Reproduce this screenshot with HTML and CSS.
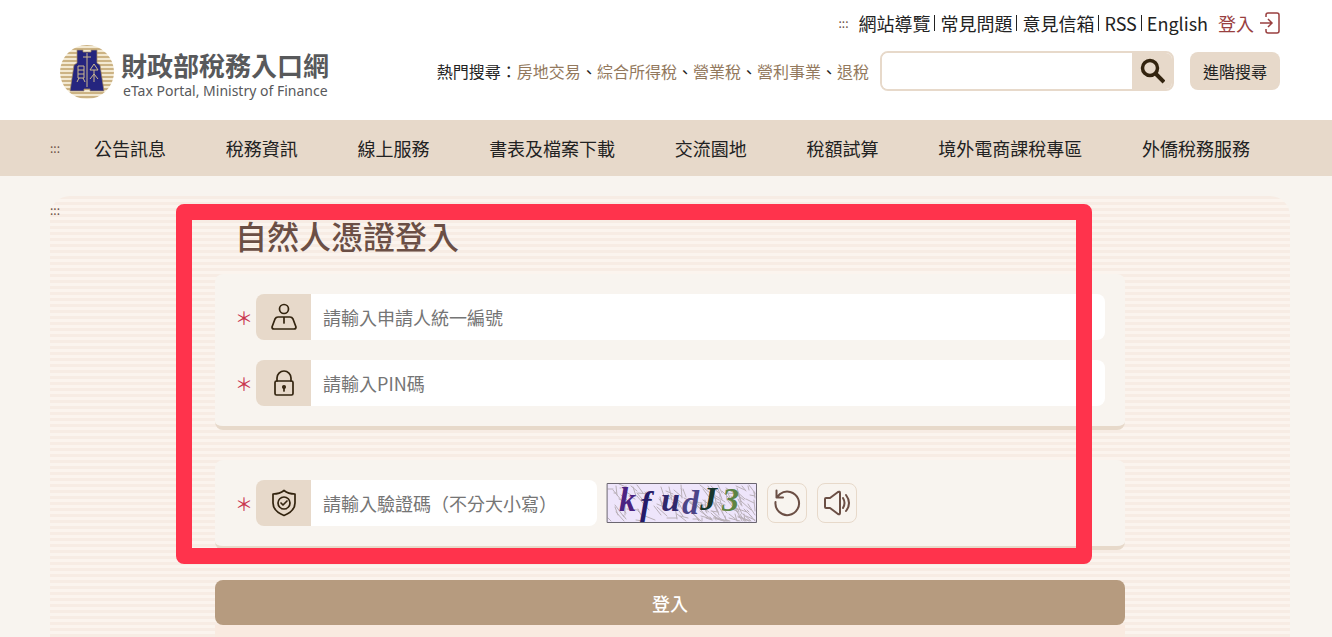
FILE: index.html
```html
<!DOCTYPE html>
<html lang="zh-Hant">
<head>
    <meta charset="UTF-8">
    <meta name="viewport" content="width=device-width, initial-scale=1.0">
    <title>自然人憑證登入 - 財政部稅務入口網</title>
    <link rel="stylesheet" href="styles.css">
</head>
<body>
    <header class="header">
        <a class="logo" href="#">
            <svg class="logo-mark" viewBox="0 0 56 56" aria-hidden="true">
                <defs>
                    <pattern id="goldLines" width="56" height="4" patternUnits="userSpaceOnUse">
                        <rect width="56" height="4" fill="#f3e9d2"/>
                        <rect width="56" height="2" fill="#ccb384"/>
                    </pattern>
                </defs>
                <circle cx="28" cy="28" r="27" fill="url(#goldLines)"/>
                <path d="M18 6h6v2h8v-2h6v13l3 2 4 26H31v-2h-6v2H11l4-26 3-2z" fill="#25257f" stroke="#a98f62" stroke-width=".7"/>
                <path d="M28 9v34M24 13h8M19 22h6v12h-6zM19 26h6M19 30h6M20 34l-2 4M24 34l2 4M35 20l-4 6h8zM35 26v12M35 30l-4 5M35 30l4 5" fill="none" stroke="#cdb98f"/>
            </svg>
            <span class="logo-text">
                <strong>財政部稅務入口網</strong>
                <small>eTax Portal, Ministry of Finance</small>
            </span>
        </a>

        <div class="header-right">
            <nav class="top-links">
                <a class="access-key" href="#top">:::</a>
                <ul>
                    <li><a href="#">網站導覽</a></li>
                    <li><a href="#">常見問題</a></li>
                    <li><a href="#">意見信箱</a></li>
                    <li><a href="#">RSS</a></li>
                    <li><a href="#">English</a></li>
                </ul>
                <a class="login-link" href="#">登入
                    <svg width="20" height="22" viewBox="0 0 20 22" fill="none" stroke="#993f3f" stroke-width="1.500" aria-hidden="true">
                        <path d="M6 5V3q0-2 2-2h9q2 0 2 2v16q0 2-2 2H8q-2 0-2-2v-2M0 11h12M8 7l4 4-4 4"/>
                    </svg>
                </a>
            </nav>

            <div class="search-row">
                <p class="hot">熱門搜尋：<a href="#">房地交易</a>、<a href="#">綜合所得稅</a>、<a href="#">營業稅</a>、<a href="#">營利事業</a>、<a href="#">退稅</a></p>
                <form class="search" role="search">
                    <input type="text" aria-label="搜尋">
                    <button type="submit" aria-label="搜尋">
                        <svg width="26" height="26" viewBox="0 0 26 26" fill="none" stroke="#33240f" aria-hidden="true">
                            <circle cx="11" cy="10" r="7.500" stroke-width="3.500"/>
                            <path d="M16 15l9 9" stroke-width="4"/>
                        </svg>
                    </button>
                </form>
                <button class="advanced" type="button">進階搜尋</button>
            </div>
        </div>
    </header>

    <nav class="main-nav">
        <a class="access-key" href="#nav">:::</a>
        <ul>
            <li><a href="#">公告訊息</a></li>
            <li><a href="#">稅務資訊</a></li>
            <li><a href="#">線上服務</a></li>
            <li><a href="#">書表及檔案下載</a></li>
            <li><a href="#">交流園地</a></li>
            <li><a href="#">稅額試算</a></li>
            <li><a href="#">境外電商課稅專區</a></li>
            <li><a href="#">外僑稅務服務</a></li>
        </ul>
    </nav>

    <main class="content">
        <a class="access-key" href="#main">:::</a>
        <div class="login-box">
            <h1>自然人憑證登入</h1>
            <form class="login-form">
                <div class="card">
                    <div class="field">
                        <span class="required">＊</span>
                        <label for="userId" aria-label="申請人統一編號">
                            <svg width="28" height="28" viewBox="0 0 28 28" aria-hidden="true">
                                <circle cx="14" cy="6" r="4.500"/>
                                <path d="M8 14h12q2 0 3 2l3 8q0 2-2 2H4q-2 0-2-2l3-8q1-2 3-2zM14 14v6"/>
                            </svg>
                        </label>
                        <input type="text" id="userId" placeholder="請輸入申請人統一編號">
                    </div>
                    <div class="field">
                        <span class="required">＊</span>
                        <label for="pin" aria-label="PIN碼">
                            <svg width="28" height="28" viewBox="0 0 28 28" aria-hidden="true">
                                <rect x="5" y="12" width="18" height="14" rx="1.500"/>
                                <path d="M7 12V9a7 7 0 0 1 14 0v3M14 19v3"/>
                                <circle cx="14" cy="18" r="1.200"/>
                            </svg>
                        </label>
                        <input type="password" id="pin" placeholder="請輸入PIN碼">
                    </div>
                </div>

                <div class="card">
                    <div class="field">
                        <span class="required">＊</span>
                        <label for="captcha" aria-label="驗證碼">
                            <svg width="28" height="28" viewBox="0 0 28 28" aria-hidden="true">
                                <path d="M14 1.500c3 2.500 7 3.500 11 3.500v9c0 6-5 10-11 12.500C8 24 3 20 3 14V5c4 0 8-1 11-3.500z"/>
                                <circle cx="14" cy="14" r="6"/>
                                <path d="M11 14l2 2 4-4"/>
                            </svg>
                        </label>
                        <input class="captcha-input" type="text" id="captcha" placeholder="請輸入驗證碼（不分大小寫）">
                        <svg class="captcha" viewBox="0 0 150 40" role="img" aria-label="驗證碼圖片">
                            <rect width="150" height="40" fill="#eee5fb"/>
                            <path id="noise" fill="none" stroke="#b9b0b8"/>
                            <text x="12" y="28" fill="#4b2382">k</text>
                            <text x="33" y="32" fill="#261b68">f</text>
                            <text x="54" y="28" fill="#30286c">u</text>
                            <text x="75" y="31" fill="#4c4488">d</text>
                            <text x="93" y="27" fill="#17352b">J</text>
                            <text x="115" y="28" fill="#5d8443">3</text>
                            <rect x=".5" y=".5" width="149" height="39" fill="none" stroke="#6b6670"/>
                        </svg>
                        <button class="tool" type="button" aria-label="更換驗證碼">
                            <svg width="28" height="28" viewBox="0 0 28 28" aria-hidden="true">
                                <path d="M2.500 13A11.800 11.800 0 1 0 7 5L3.500 8.500M3.500 1.500v7h6.500"/>
                            </svg>
                        </button>
                        <button class="tool" type="button" aria-label="播放驗證碼">
                            <svg width="28" height="28" viewBox="0 0 28 28" aria-hidden="true">
                                <path d="M3 9h4l8-6q2-1 2 1v20q0 2-2 1l-8-6H3q-1 0-1-1v-8q0-1 1-1zM20 9q3 5 0 10M23 6q6 8 0 16"/>
                            </svg>
                        </button>
                    </div>
                </div>

                <button class="submit" type="submit">登入</button>
            </form>
            <div class="tips"></div>
            <div class="highlight"></div>
        </div>
    </main>

    <script>
        // 驗證碼背景雜線
        let seed = 7;
        function random() {
            seed = (seed * 16807) % 2147483647;
            return seed / 2147483647;
        }

        let lines = '';
        for (let i = 0; i < 150; i++) {
            const x = Math.round(random() * 147) + 1;
            const y = Math.round(random() * 37) + 1;
            const x2 = Math.min(148, x + Math.round(random() * 12));
            const y2 = Math.min(38, y + Math.round(random() * 14));
            lines += `M${x} ${y}L${x2} ${y2}`;
        }
        document.getElementById('noise').setAttribute('d', lines);
    </script>
</body>
</html>
```
FILE: styles.css
```css
* {
    box-sizing: border-box;
}

body {
    display: flex;
    flex-direction: column;
    min-height: 100vh;
    margin: 0;
    background-color: #f8f4ef;
    color: #222222;
    font-family: "Noto Sans CJK TC", "Noto Sans", sans-serif;
    font-size: 18px;
    line-height: 24px;
}

a {
    color: inherit;
    text-decoration: none;
}

ul {
    display: flex;
    margin: 0;
    padding: 0;
    list-style: none;
}

h1, p {
    margin: 0;
}

input, button {
    font-family: inherit;
    font-size: 18px;
    border: none;
}

button {
    display: flex;
    justify-content: center;
    align-items: center;
    padding: 0;
    cursor: pointer;
}

.access-key {
    font-size: 12px;
    color: #6b4f45;
}

/* 頁首 */
.header {
    display: flex;
    justify-content: space-between;
    height: 120px;
    padding: 11px 52px 0 59px;
    background-color: #ffffff;
}

.logo {
    display: flex;
    gap: 6px;
    margin-top: 33px;
    height: 56px;
}

.logo-mark {
    width: 56px;
    height: 56px;
}

.logo-text {
    display: flex;
    flex-direction: column;
    padding-top: 7px;
    color: #58595b;
}

.logo-text strong {
    font-size: 26px;
    line-height: 28px;
}

.logo-text small {
    padding-left: 2px;
    font-family: "Noto Sans", sans-serif;
    font-size: 14px;
    line-height: 24px;
}

.header-right {
    display: flex;
    flex-direction: column;
    align-items: flex-end;
    gap: 16px;
}

.top-links, .login-link {
    display: flex;
    align-items: center;
}

.top-links ul {
    margin-left: 10px;
}

.top-links li {
    display: flex;
    align-items: center;
}

.top-links li + li::before {
    content: "";
    width: 1px;
    height: 16px;
    margin: 0 5px 0 4px;
    background-color: #222222;
}

.login-link {
    gap: 6px;
    margin-left: 10px;
    color: #993f3f;
}

.search-row {
    display: flex;
    align-items: center;
}

.hot {
    font-size: 16px;
}

.hot a {
    color: #93795d;
}

.search {
    display: flex;
    width: 294px;
    height: 40px;
    margin: 0 16px 0 11px;
    border: 2px solid #e7d9ca;
    border-radius: 8px;
    overflow: hidden;
}

.search input {
    flex: 1;
    min-width: 0;
}

.search button {
    width: 40px;
    background-color: #e7d9ca;
}

.advanced {
    width: 90px;
    height: 38px;
    border-radius: 8px;
    background-color: #e7d9ca;
    color: #222222;
    font-size: 16px;
}

/* 主選單 */
.main-nav {
    display: flex;
    align-items: center;
    height: 56px;
    padding: 0 82px 0 50px;
    background-color: #e7d9ca;
}

.main-nav ul {
    flex: 1;
    justify-content: space-between;
    margin-left: 34px;
}

/* 內容 */
.content {
    flex: 1;
    display: flex;
    flex-direction: column;
    margin: 20px 42px 0 50px;
    border-radius: 20px 20px 0 0;
    background: linear-gradient(#f7ece4 50%, #fbf4ee 50%);
    background-size: 100% 6px;
}

.content > .access-key {
    height: 16px;
    line-height: 28px;
}

.login-box {
    position: relative;
    flex: 1;
    display: flex;
    flex-direction: column;
    margin: 0 165px;
}

h1 {
    padding: 0 20px 16px;
    color: #6b4f45;
    font-size: 32px;
    font-weight: 500;
    line-height: 46px;
}

.login-form {
    display: flex;
    flex-direction: column;
    gap: 30px;
}

.card {
    display: flex;
    flex-direction: column;
    gap: 20px;
    padding: 20px;
    border-bottom: 4px solid #e7d9ca;
    border-radius: 8px;
    background-color: #f8f4ef;
}

.field {
    display: flex;
    align-items: center;
}

.required {
    width: 21px;
    color: #c9364f;
}

.field label {
    display: flex;
    justify-content: center;
    align-items: center;
    width: 55px;
    height: 46px;
    border-radius: 8px 0 0 8px;
    background-color: #e7d9ca;
}

.field svg {
    fill: none;
    stroke: #33240f;
    stroke-width: 1.7;
    stroke-linecap: round;
    stroke-linejoin: round;
}

.field input {
    flex: 1;
    min-width: 0;
    height: 46px;
    padding: 0 12px;
    border-radius: 0 8px 8px 0;
    background-color: #ffffff;
}

.field input::placeholder {
    color: #757575;
}

.field .captcha-input {
    flex: 0 1 286px;
}

.field .captcha {
    width: 150px;
    height: 40px;
    margin-left: 10px;
    overflow: visible;
    stroke: none;
    stroke-width: 1;
}

.captcha text {
    font-family: "Liberation Serif", serif;
    font-size: 34px;
    font-style: italic;
    font-weight: bold;
}

.tool {
    width: 40px;
    height: 40px;
    margin-left: 10px;
    border: 1px solid #e7d9ca;
    border-radius: 8px;
    background-color: #f8f4ef;
}

.field .tool svg {
    stroke: #6b4f45;
    stroke-width: 2;
}

.submit {
    height: 45px;
    border-radius: 8px;
    background-color: #b69b7f;
    color: #ffffff;
    font-weight: 500;
}

.tips {
    flex: 1;
    min-height: 12px;
    background-color: #f9eae0;
}

/* 紅色標示框 */
.highlight {
    position: absolute;
    top: -8px;
    left: -39px;
    right: 33px;
    height: 360px;
    border: 16px solid #ff334c;
    border-radius: 8px;
    pointer-events: none;
}
```
